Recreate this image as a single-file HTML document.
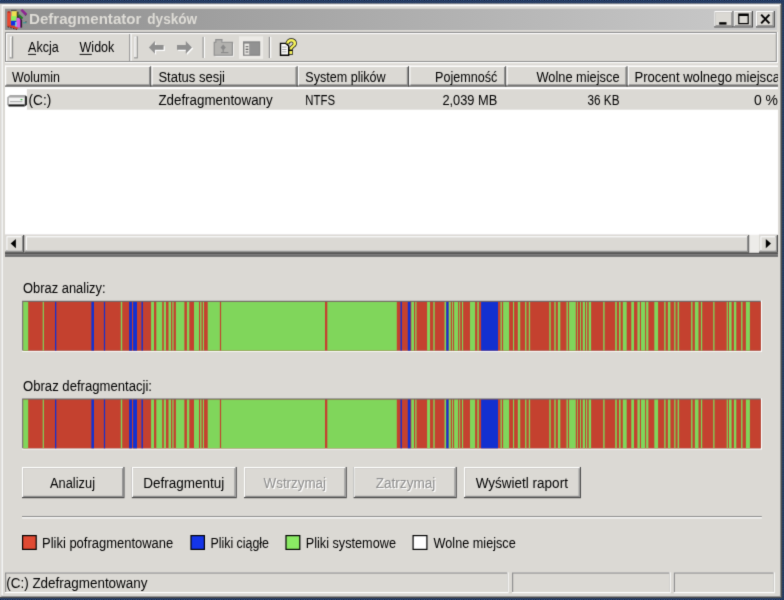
<!DOCTYPE html>
<html><head><meta charset="utf-8"><title>Defragmentator dysków</title>
<style>html,body{margin:0;padding:0;background:#263a5e;overflow:hidden}svg{display:block}text{font-family:"Liberation Sans",sans-serif}</style>
</head><body>
<svg width="784" height="600" viewBox="0 0 784 600">
<defs><filter id="bl" x="0" y="0" width="784" height="600" filterUnits="userSpaceOnUse" color-interpolation-filters="sRGB"><feConvolveMatrix order="3" kernelMatrix="0.0144 0.0912 0.0144 0.0912 0.5776 0.0912 0.0144 0.0912 0.0144" divisor="1" edgeMode="duplicate" preserveAlpha="true"/></filter></defs>
<g filter="url(#bl)">
<defs><pattern id="dp" width="2.4" height="2.4" patternUnits="userSpaceOnUse"><rect width="2.4" height="2.4" fill="#15203a"/><rect width="1.2" height="1.2" fill="#36588c"/><rect x="1.2" y="1.2" width="1.2" height="1.2" fill="#36588c"/></pattern></defs>
<rect x="0.00" y="0.00" width="784.00" height="600.00" fill="url(#dp)" />
<rect x="0.00" y="3.60" width="782.20" height="594.50" fill="#4c4c4c" />
<rect x="0.00" y="3.60" width="781.00" height="593.30" fill="#dbd9d4" />
<rect x="1.30" y="4.90" width="779.70" height="592.00" fill="#909090" />
<rect x="1.30" y="4.60" width="778.50" height="591.10" fill="#ffffff" />
<rect x="2.70" y="6.20" width="777.10" height="589.50" fill="#dbd9d4" />
<defs><linearGradient id="tg" x1="0" x2="1" y1="0" y2="0"><stop offset="0" stop-color="#8f8f8f"/><stop offset="1" stop-color="#cbcbcb"/></linearGradient></defs>
<rect x="5.00" y="8.75" width="772.00" height="21.25" fill="url(#tg)" />
<text y="24.2" font-size="14.5" font-weight="bold" fill="#dedcd6"><tspan x="29" textLength="112.4" lengthAdjust="spacingAndGlyphs">Defragmentator</tspan> <tspan x="147.3" textLength="49.9" lengthAdjust="spacingAndGlyphs">dysków</tspan></text>
<g>
<path d="M7.4 25.4 L10.6 24.4 L18.6 27.6 L17 29.3 L7.4 26.6z" fill="#d63e28"/>
<path d="M7.6 26.8 L16.8 29.6" stroke="#3a1a14" stroke-width="0.9" stroke-dasharray="1.6 1.2"/>
<path d="M7.2 12 L8.8 11.2 L10.8 12 L10.8 25 L7.2 26z" fill="#e8482f"/>
<path d="M7.2 12 L8.8 11.2 L10.8 12 L9 12.8z" fill="#a02a1c"/>
<rect x="11.6" y="11.2" width="5.4" height="5.8" fill="#eedf52"/>
<rect x="16.4" y="11.4" width="1.2" height="6" fill="#a89a30"/>
<rect x="17.4" y="11.8" width="1" height="7" fill="#151515"/>
<path d="M11 10.4 h5.6" stroke="#333" stroke-width="0.8"/>
<rect x="11" y="16.2" width="5.2" height="5" fill="#8af05e"/>
<rect x="11" y="20.8" width="5.2" height="4.6" fill="#1030e2"/>
<rect x="15.2" y="22" width="3" height="4.6" fill="#72e2e2"/>
<rect x="16.6" y="18" width="3.6" height="9.4" fill="#d45fe4"/>
<rect x="20" y="18.6" width="1.3" height="9" fill="#7a1f86"/>
<rect x="21.2" y="20" width="0.9" height="7.6" fill="#151515"/>
<path d="M18 15.4 L19.4 14.2 L23.2 17.8 L21.8 19.4z" fill="#1f7d22"/>
<path d="M17.8 16.2 L21.4 19.8" stroke="#111" stroke-width="0.9"/>
<path d="M20.4 10.6 L22.4 9 L27.2 13.8 L25.3 15.8z" fill="#8c2491"/>
<path d="M25.4 15.6 L26.6 14.6" stroke="#444" stroke-width="1"/>
<rect x="23" y="22.2" width="3.4" height="1.1" fill="#2f9c9c"/>
<rect x="25.5" y="21.3" width="1" height="1" fill="#333"/>
</g>
<rect x="714.20" y="11.00" width="19.40" height="16.50" fill="#4c4c4c" />
<rect x="714.20" y="11.00" width="18.20" height="15.30" fill="#ffffff" />
<rect x="715.40" y="12.20" width="17.00" height="14.10" fill="#909090" />
<rect x="715.40" y="12.20" width="15.80" height="12.90" fill="#dbd9d4" />
<rect x="733.60" y="11.00" width="19.40" height="16.50" fill="#4c4c4c" />
<rect x="733.60" y="11.00" width="18.20" height="15.30" fill="#ffffff" />
<rect x="734.80" y="12.20" width="17.00" height="14.10" fill="#909090" />
<rect x="734.80" y="12.20" width="15.80" height="12.90" fill="#dbd9d4" />
<rect x="756.00" y="11.00" width="18.90" height="16.50" fill="#4c4c4c" />
<rect x="756.00" y="11.00" width="17.70" height="15.30" fill="#ffffff" />
<rect x="757.20" y="12.20" width="16.50" height="14.10" fill="#909090" />
<rect x="757.20" y="12.20" width="15.30" height="12.90" fill="#dbd9d4" />
<rect x="719.20" y="22.20" width="7.30" height="2.40" fill="#000" />
<path d="M738.2 13.6h10.6v10.6h-10.6z M739.4 16h8.2v7h-8.2z" fill="#000" fill-rule="evenodd"/>
<path d="M761.2 14.6 L769.4 23.4 M769.4 14.6 L761.2 23.4" stroke="#000" stroke-width="2" fill="none"/>
<rect x="5.00" y="31.90" width="772.00" height="1.10" fill="#909090" />
<rect x="5.00" y="33.00" width="772.00" height="1.10" fill="#ffffff" />
<rect x="5.00" y="61.00" width="772.00" height="1.00" fill="#909090" />
<rect x="5.00" y="62.00" width="772.00" height="1.20" fill="#ffffff" />
<rect x="5.00" y="33.00" width="1.00" height="29.00" fill="#909090" />
<rect x="6.00" y="34.00" width="1.10" height="27.00" fill="#ffffff" />
<rect x="775.80" y="33.00" width="1.10" height="29.00" fill="#909090" />
<rect x="776.90" y="32.00" width="1.10" height="31.00" fill="#ffffff" />
<rect x="9.60" y="36.30" width="3.60" height="22.10" fill="#909090" />
<rect x="9.60" y="36.30" width="2.40" height="20.90" fill="#ffffff" />
<rect x="10.80" y="37.50" width="1.20" height="19.70" fill="#dbd9d4" />
<rect x="129.20" y="34.00" width="1.20" height="27.00" fill="#909090" />
<rect x="130.40" y="34.00" width="1.20" height="27.00" fill="#ffffff" />
<rect x="134.20" y="36.30" width="3.60" height="22.10" fill="#909090" />
<rect x="134.20" y="36.30" width="2.40" height="20.90" fill="#ffffff" />
<rect x="135.40" y="37.50" width="1.20" height="19.70" fill="#dbd9d4" />
<text x="28.10" y="51.90" font-size="14" font-weight="normal" fill="#000" textLength="30.65" lengthAdjust="spacingAndGlyphs" >Akcja</text>
<rect x="28.10" y="53.90" width="7.90" height="1.10" fill="#222" />
<text x="79.60" y="51.90" font-size="14" font-weight="normal" fill="#000" textLength="34.65" lengthAdjust="spacingAndGlyphs" >Widok</text>
<rect x="79.60" y="53.90" width="12.20" height="1.10" fill="#222" />
<path d="M150.1 48.6 l6 -6.3 v4 h8.7 v4.6 h-8.7 v4 z" fill="#ffffff"/>
<path d="M148.9 47.4 l6 -6.3 v4 h8.7 v4.6 h-8.7 v4 z" fill="#8f8f8f"/>
<path d="M193.2 48.6 l-6.2 -6.3 v4 h-8.8 v4.6 h8.8 v4 z" fill="#ffffff"/>
<path d="M192 47.4 l-6.2 -6.3 v4 h-8.8 v4.6 h8.8 v4 z" fill="#8f8f8f"/>
<rect x="202.60" y="36.90" width="1.20" height="21.10" fill="#909090" />
<rect x="203.80" y="36.90" width="1.20" height="21.10" fill="#ffffff" />
<rect x="268.80" y="36.90" width="1.20" height="21.10" fill="#909090" />
<rect x="270.00" y="36.90" width="1.20" height="21.10" fill="#ffffff" />
<path d="M215.4 43.4 h1.6 v-2.6 h6.2 v2.6 h10.4 v13 h-18.2 z" fill="#fff"/>
<path d="M214.2 42.2 h1.6 v-2.6 h6.2 v2.6 h10.4 v13 h-18.2 z" fill="#b3b2af" stroke="#8c8c8c" stroke-width="1.1"/>
<path d="M223.2 44.6 l2.6 3 l-2.6 3 l-2.6 -3 z" fill="#8a8a8a"/><rect x="222.6" y="50" width="1.2" height="3" fill="#8a8a8a"/><rect x="221" y="52" width="7.4" height="1.2" fill="#8a8a8a"/>
<rect x="239.00" y="36.30" width="24.10" height="22.60" fill="#eceae6" />
<rect x="243.00" y="41.30" width="17.20" height="14.50" fill="#858585" />
<rect x="244.40" y="43.60" width="5.10" height="11.00" fill="#e8e6e2" />
<rect x="249.50" y="42.60" width="9.70" height="12.00" fill="#929292" />
<rect x="245.60" y="46.00" width="2.80" height="1.20" fill="#777" />
<rect x="245.60" y="48.70" width="2.80" height="1.20" fill="#555" />
<rect x="245.60" y="51.40" width="2.80" height="1.20" fill="#777" />
<path d="M280.5 43.4 h5.6 l2.6 2.6 v9.2 h-8.2 z" fill="#fff" stroke="#000" stroke-width="1.4"/>
<rect x="282.20" y="46.60" width="4.40" height="0.90" fill="#9a9a9a" />
<rect x="282.20" y="49.00" width="4.40" height="0.90" fill="#9a9a9a" />
<rect x="282.20" y="51.40" width="4.40" height="0.90" fill="#9a9a9a" />
<text x="285.2" y="54.2" font-size="21.5" font-weight="bold" fill="#f6f25c" stroke="#000" stroke-width="1.5" paint-order="stroke" textLength="12" lengthAdjust="spacingAndGlyphs">?</text>
<rect x="5.00" y="65.60" width="773.00" height="187.40" fill="#ffffff" />
<rect x="5.00" y="65.60" width="773.00" height="21.00" fill="#dbd9d4" />
<rect x="5.00" y="65.60" width="773.00" height="1.30" fill="#ffffff" />
<rect x="5.00" y="84.30" width="773.00" height="1.20" fill="#909090" />
<rect x="5.00" y="85.40" width="773.00" height="1.20" fill="#4c4c4c" />
<rect x="149.00" y="67.00" width="1.20" height="18.40" fill="#909090" />
<rect x="150.20" y="66.20" width="1.20" height="20.40" fill="#4c4c4c" />
<rect x="151.40" y="65.60" width="1.20" height="19.80" fill="#ffffff" />
<rect x="295.40" y="67.00" width="1.20" height="18.40" fill="#909090" />
<rect x="296.60" y="66.20" width="1.20" height="20.40" fill="#4c4c4c" />
<rect x="297.80" y="65.60" width="1.20" height="19.80" fill="#ffffff" />
<rect x="406.80" y="67.00" width="1.20" height="18.40" fill="#909090" />
<rect x="408.00" y="66.20" width="1.20" height="20.40" fill="#4c4c4c" />
<rect x="409.20" y="65.60" width="1.20" height="19.80" fill="#ffffff" />
<rect x="504.00" y="67.00" width="1.20" height="18.40" fill="#909090" />
<rect x="505.20" y="66.20" width="1.20" height="20.40" fill="#4c4c4c" />
<rect x="506.40" y="65.60" width="1.20" height="19.80" fill="#ffffff" />
<rect x="625.30" y="67.00" width="1.20" height="18.40" fill="#909090" />
<rect x="626.50" y="66.20" width="1.20" height="20.40" fill="#4c4c4c" />
<rect x="627.70" y="65.60" width="1.20" height="19.80" fill="#ffffff" />
<rect x="5.00" y="65.60" width="1.20" height="19.80" fill="#ffffff" />
<text x="11.90" y="81.50" font-size="14" font-weight="normal" fill="#000" textLength="48.10" lengthAdjust="spacingAndGlyphs" >Wolumin</text>
<text x="158.40" y="81.50" font-size="14" font-weight="normal" fill="#000" textLength="66.60" lengthAdjust="spacingAndGlyphs" >Status sesji</text>
<text x="305.30" y="81.50" font-size="14" font-weight="normal" fill="#000" textLength="80.40" lengthAdjust="spacingAndGlyphs" >System plików</text>
<text x="435.00" y="81.50" font-size="14" font-weight="normal" fill="#000" textLength="62.30" lengthAdjust="spacingAndGlyphs" >Pojemność</text>
<text x="536.50" y="81.50" font-size="14" font-weight="normal" fill="#000" textLength="83.00" lengthAdjust="spacingAndGlyphs" >Wolne miejsce</text>
<clipPath id="lc"><rect x="5" y="60" width="773" height="200"/></clipPath>
<text x="634.40" y="81.50" font-size="14" font-weight="normal" fill="#000" textLength="145.60" lengthAdjust="spacingAndGlyphs" clip-path="url(#lc)">Procent wolnego miejsca</text>
<rect x="26.90" y="89.20" width="751.10" height="20.50" fill="#dbd9d4" />
<text x="28.60" y="105.00" font-size="14" font-weight="normal" fill="#000" textLength="22.65" lengthAdjust="spacingAndGlyphs" >(C:)</text>
<text x="158.40" y="105.00" font-size="14" font-weight="normal" fill="#000" textLength="114.30" lengthAdjust="spacingAndGlyphs" >Zdefragmentowany</text>
<text x="305.30" y="105.00" font-size="14" font-weight="normal" fill="#000" textLength="29.70" lengthAdjust="spacingAndGlyphs" >NTFS</text>
<text x="442.40" y="105.00" font-size="14" font-weight="normal" fill="#000" textLength="54.90" lengthAdjust="spacingAndGlyphs" >2,039 MB</text>
<text x="587.60" y="105.00" font-size="14" font-weight="normal" fill="#000" textLength="31.90" lengthAdjust="spacingAndGlyphs" >36 KB</text>
<text x="754.00" y="105.00" font-size="14" font-weight="normal" fill="#000" textLength="24.00" lengthAdjust="spacingAndGlyphs" >0 %</text>
<path d="M10 95 h15 l2 1.6 v8 l-2.6 1.8 h-15.6 l-1.6 -1.6 v-7.6 z" fill="#a8a8a8"/>
<path d="M25 95.4 l2 1.4 v8 l-2.4 1.6 z" fill="#2c2c2c"/>
<rect x="8.60" y="104.40" width="15.80" height="2.00" fill="#1c1c1c" />
<rect x="8.80" y="97.60" width="15.80" height="6.60" fill="#f2f2f2" />
<rect x="10.00" y="101.00" width="12.40" height="1.20" fill="#b4b4b4" />
<rect x="20.60" y="99.00" width="1.80" height="1.20" fill="#3fae3f" />
<rect x="5.00" y="234.90" width="773.00" height="17.90" fill="#dbd9d4" />
<rect x="5.00" y="234.90" width="19.20" height="17.90" fill="#4c4c4c" />
<rect x="5.00" y="234.90" width="18.00" height="16.70" fill="#dbd9d4" />
<rect x="6.20" y="236.10" width="16.80" height="15.50" fill="#909090" />
<rect x="6.20" y="236.10" width="15.60" height="14.30" fill="#ffffff" />
<rect x="7.40" y="237.30" width="14.40" height="13.10" fill="#dbd9d4" />
<rect x="24.40" y="234.90" width="725.00" height="17.90" fill="#4c4c4c" />
<rect x="24.40" y="234.90" width="723.80" height="16.70" fill="#dbd9d4" />
<rect x="25.60" y="236.10" width="722.60" height="15.50" fill="#909090" />
<rect x="25.60" y="236.10" width="721.40" height="14.30" fill="#ffffff" />
<rect x="26.80" y="237.30" width="720.20" height="13.10" fill="#dbd9d4" />
<rect x="749.40" y="234.90" width="9.60" height="17.90" fill="#edece9" />
<rect x="759.00" y="234.90" width="19.00" height="17.90" fill="#4c4c4c" />
<rect x="759.00" y="234.90" width="17.80" height="16.70" fill="#dbd9d4" />
<rect x="760.20" y="236.10" width="16.60" height="15.50" fill="#909090" />
<rect x="760.20" y="236.10" width="15.40" height="14.30" fill="#ffffff" />
<rect x="761.40" y="237.30" width="14.20" height="13.10" fill="#dbd9d4" />
<path d="M10.7 243.6 l5.2 -4.6 v9.2 z" fill="#000"/>
<path d="M771 243.6 l-5.2 -4.6 v9.2 z" fill="#000"/>
<rect x="5.00" y="252.80" width="773.00" height="1.40" fill="#555" />
<rect x="5.00" y="254.20" width="773.00" height="2.70" fill="#6e6e6e" />
<text x="23.00" y="293.00" font-size="14" font-weight="normal" fill="#000" textLength="82.50" lengthAdjust="spacingAndGlyphs" >Obraz analizy:</text>
<text x="23.00" y="390.50" font-size="14" font-weight="normal" fill="#000" textLength="129.00" lengthAdjust="spacingAndGlyphs" >Obraz defragmentacji:</text>
<g transform="translate(0 300.7)">
<rect x="22.10" y="0.00" width="739.90" height="51.10" fill="#ffffff" />
<rect x="22.10" y="0.00" width="738.70" height="49.90" fill="#6a6a6a" />
<rect x="23.20" y="1.20" width="737.60" height="48.70" fill="#c4412f" />
<rect x="23.20" y="1.20" width="5.00" height="48.70" fill="#80d65b" />
<rect x="42.70" y="1.20" width="1.20" height="48.70" fill="#80d65b" />
<rect x="55.00" y="1.20" width="1.30" height="48.70" fill="#1330d0" />
<rect x="91.40" y="1.20" width="2.60" height="48.70" fill="#1330d0" />
<rect x="103.90" y="1.20" width="1.20" height="48.70" fill="#1330d0" />
<rect x="120.80" y="1.20" width="1.40" height="48.70" fill="#80d65b" />
<rect x="129.10" y="1.20" width="2.90" height="48.70" fill="#1330d0" />
<rect x="133.10" y="1.20" width="3.90" height="48.70" fill="#1330d0" />
<rect x="141.50" y="1.20" width="1.40" height="48.70" fill="#1330d0" />
<rect x="151.10" y="1.20" width="2.90" height="48.70" fill="#80d65b" />
<rect x="156.30" y="1.20" width="5.90" height="48.70" fill="#80d65b" />
<rect x="163.80" y="1.20" width="2.20" height="48.70" fill="#80d65b" />
<rect x="168.50" y="1.20" width="2.50" height="48.70" fill="#80d65b" />
<rect x="172.30" y="1.20" width="1.30" height="48.70" fill="#80d65b" />
<rect x="175.90" y="1.20" width="8.50" height="48.70" fill="#80d65b" />
<rect x="186.90" y="1.20" width="2.40" height="48.70" fill="#80d65b" />
<rect x="194.00" y="1.20" width="5.00" height="48.70" fill="#80d65b" />
<rect x="200.10" y="1.20" width="1.40" height="48.70" fill="#80d65b" />
<rect x="202.90" y="1.20" width="1.10" height="48.70" fill="#80d65b" />
<rect x="207.70" y="1.20" width="12.20" height="48.70" fill="#80d65b" />
<rect x="221.10" y="1.20" width="103.90" height="48.70" fill="#80d65b" />
<rect x="327.30" y="1.20" width="69.50" height="48.70" fill="#80d65b" />
<rect x="400.50" y="1.20" width="1.40" height="48.70" fill="#1330d0" />
<rect x="407.80" y="1.20" width="2.70" height="48.70" fill="#1330d0" />
<rect x="411.30" y="1.20" width="2.70" height="48.70" fill="#80d65b" />
<rect x="415.20" y="1.20" width="1.30" height="48.70" fill="#80d65b" />
<rect x="427.10" y="1.20" width="2.90" height="48.70" fill="#80d65b" />
<rect x="433.30" y="1.20" width="1.40" height="48.70" fill="#80d65b" />
<rect x="444.50" y="1.20" width="1.80" height="48.70" fill="#80d65b" />
<rect x="446.30" y="1.20" width="2.45" height="48.70" fill="#1330d0" />
<rect x="448.75" y="1.20" width="2.05" height="48.70" fill="#80d65b" />
<rect x="452.00" y="1.20" width="1.00" height="48.70" fill="#80d65b" />
<rect x="454.10" y="1.20" width="4.00" height="48.70" fill="#80d65b" />
<rect x="459.20" y="1.20" width="1.00" height="48.70" fill="#80d65b" />
<rect x="462.00" y="1.20" width="1.10" height="48.70" fill="#80d65b" />
<rect x="470.00" y="1.20" width="5.10" height="48.70" fill="#80d65b" />
<rect x="477.30" y="1.20" width="1.50" height="48.70" fill="#80d65b" />
<rect x="481.10" y="1.20" width="16.90" height="48.70" fill="#1330d0" />
<rect x="500.50" y="1.20" width="1.40" height="48.70" fill="#80d65b" />
<rect x="503.10" y="1.20" width="6.00" height="48.70" fill="#80d65b" />
<rect x="513.00" y="1.20" width="1.10" height="48.70" fill="#80d65b" />
<rect x="517.80" y="1.20" width="2.40" height="48.70" fill="#80d65b" />
<rect x="525.10" y="1.20" width="1.30" height="48.70" fill="#80d65b" />
<rect x="528.80" y="1.20" width="1.30" height="48.70" fill="#80d65b" />
<rect x="549.30" y="1.20" width="1.40" height="48.70" fill="#80d65b" />
<rect x="554.30" y="1.20" width="1.40" height="48.70" fill="#80d65b" />
<rect x="557.90" y="1.20" width="2.40" height="48.70" fill="#80d65b" />
<rect x="566.50" y="1.20" width="1.40" height="48.70" fill="#80d65b" />
<rect x="569.10" y="1.20" width="6.70" height="48.70" fill="#80d65b" />
<rect x="577.00" y="1.20" width="0.80" height="48.70" fill="#80d65b" />
<rect x="580.00" y="1.20" width="1.00" height="48.70" fill="#80d65b" />
<rect x="582.70" y="1.20" width="2.30" height="48.70" fill="#80d65b" />
<rect x="586.00" y="1.20" width="1.20" height="48.70" fill="#80d65b" />
<rect x="588.70" y="1.20" width="2.40" height="48.70" fill="#80d65b" />
<rect x="603.20" y="1.20" width="1.40" height="48.70" fill="#80d65b" />
<rect x="615.20" y="1.20" width="1.60" height="48.70" fill="#80d65b" />
<rect x="619.00" y="1.20" width="1.60" height="48.70" fill="#80d65b" />
<rect x="622.80" y="1.20" width="3.90" height="48.70" fill="#80d65b" />
<rect x="631.25" y="1.20" width="2.75" height="48.70" fill="#80d65b" />
<rect x="637.40" y="1.20" width="2.50" height="48.70" fill="#80d65b" />
<rect x="641.00" y="1.20" width="4.10" height="48.70" fill="#80d65b" />
<rect x="646.10" y="1.20" width="2.30" height="48.70" fill="#80d65b" />
<rect x="654.30" y="1.20" width="3.80" height="48.70" fill="#80d65b" />
<rect x="664.20" y="1.20" width="1.40" height="48.70" fill="#80d65b" />
<rect x="667.90" y="1.20" width="2.50" height="48.70" fill="#80d65b" />
<rect x="674.20" y="1.20" width="1.30" height="48.70" fill="#80d65b" />
<rect x="677.60" y="1.20" width="1.50" height="48.70" fill="#80d65b" />
<rect x="691.10" y="1.20" width="1.40" height="48.70" fill="#80d65b" />
<rect x="694.85" y="1.20" width="3.65" height="48.70" fill="#80d65b" />
<rect x="700.90" y="1.20" width="1.30" height="48.70" fill="#80d65b" />
<rect x="713.20" y="1.20" width="1.30" height="48.70" fill="#80d65b" />
<rect x="726.70" y="1.20" width="1.20" height="48.70" fill="#80d65b" />
<rect x="729.00" y="1.20" width="2.60" height="48.70" fill="#80d65b" />
<rect x="733.90" y="1.20" width="2.40" height="48.70" fill="#80d65b" />
<rect x="741.10" y="1.20" width="1.40" height="48.70" fill="#80d65b" />
<rect x="745.90" y="1.20" width="4.00" height="48.70" fill="#80d65b" />
</g>
<g transform="translate(0 398.4)">
<rect x="22.10" y="0.00" width="739.90" height="51.10" fill="#ffffff" />
<rect x="22.10" y="0.00" width="738.70" height="49.90" fill="#6a6a6a" />
<rect x="23.20" y="1.20" width="737.60" height="48.70" fill="#c4412f" />
<rect x="23.20" y="1.20" width="5.00" height="48.70" fill="#80d65b" />
<rect x="42.70" y="1.20" width="1.20" height="48.70" fill="#80d65b" />
<rect x="55.00" y="1.20" width="1.30" height="48.70" fill="#1330d0" />
<rect x="91.40" y="1.20" width="2.60" height="48.70" fill="#1330d0" />
<rect x="103.90" y="1.20" width="1.20" height="48.70" fill="#1330d0" />
<rect x="120.80" y="1.20" width="1.40" height="48.70" fill="#80d65b" />
<rect x="129.10" y="1.20" width="2.90" height="48.70" fill="#1330d0" />
<rect x="133.10" y="1.20" width="3.90" height="48.70" fill="#1330d0" />
<rect x="141.50" y="1.20" width="1.40" height="48.70" fill="#1330d0" />
<rect x="151.10" y="1.20" width="2.90" height="48.70" fill="#80d65b" />
<rect x="156.30" y="1.20" width="5.90" height="48.70" fill="#80d65b" />
<rect x="163.80" y="1.20" width="2.20" height="48.70" fill="#80d65b" />
<rect x="168.50" y="1.20" width="2.50" height="48.70" fill="#80d65b" />
<rect x="172.30" y="1.20" width="1.30" height="48.70" fill="#80d65b" />
<rect x="175.90" y="1.20" width="8.50" height="48.70" fill="#80d65b" />
<rect x="186.90" y="1.20" width="2.40" height="48.70" fill="#80d65b" />
<rect x="194.00" y="1.20" width="5.00" height="48.70" fill="#80d65b" />
<rect x="200.10" y="1.20" width="1.40" height="48.70" fill="#80d65b" />
<rect x="202.90" y="1.20" width="1.10" height="48.70" fill="#80d65b" />
<rect x="207.70" y="1.20" width="12.20" height="48.70" fill="#80d65b" />
<rect x="221.10" y="1.20" width="103.90" height="48.70" fill="#80d65b" />
<rect x="327.30" y="1.20" width="69.50" height="48.70" fill="#80d65b" />
<rect x="400.50" y="1.20" width="1.40" height="48.70" fill="#1330d0" />
<rect x="407.80" y="1.20" width="2.70" height="48.70" fill="#1330d0" />
<rect x="411.30" y="1.20" width="2.70" height="48.70" fill="#80d65b" />
<rect x="415.20" y="1.20" width="1.30" height="48.70" fill="#80d65b" />
<rect x="427.10" y="1.20" width="2.90" height="48.70" fill="#80d65b" />
<rect x="433.30" y="1.20" width="1.40" height="48.70" fill="#80d65b" />
<rect x="444.50" y="1.20" width="1.80" height="48.70" fill="#80d65b" />
<rect x="446.30" y="1.20" width="2.45" height="48.70" fill="#1330d0" />
<rect x="448.75" y="1.20" width="2.05" height="48.70" fill="#80d65b" />
<rect x="452.00" y="1.20" width="1.00" height="48.70" fill="#80d65b" />
<rect x="454.10" y="1.20" width="4.00" height="48.70" fill="#80d65b" />
<rect x="459.20" y="1.20" width="1.00" height="48.70" fill="#80d65b" />
<rect x="462.00" y="1.20" width="1.10" height="48.70" fill="#80d65b" />
<rect x="470.00" y="1.20" width="5.10" height="48.70" fill="#80d65b" />
<rect x="477.30" y="1.20" width="1.50" height="48.70" fill="#80d65b" />
<rect x="481.10" y="1.20" width="16.90" height="48.70" fill="#1330d0" />
<rect x="500.50" y="1.20" width="1.40" height="48.70" fill="#80d65b" />
<rect x="503.10" y="1.20" width="6.00" height="48.70" fill="#80d65b" />
<rect x="513.00" y="1.20" width="1.10" height="48.70" fill="#80d65b" />
<rect x="517.80" y="1.20" width="2.40" height="48.70" fill="#80d65b" />
<rect x="525.10" y="1.20" width="1.30" height="48.70" fill="#80d65b" />
<rect x="528.80" y="1.20" width="1.30" height="48.70" fill="#80d65b" />
<rect x="549.30" y="1.20" width="1.40" height="48.70" fill="#80d65b" />
<rect x="554.30" y="1.20" width="1.40" height="48.70" fill="#80d65b" />
<rect x="557.90" y="1.20" width="2.40" height="48.70" fill="#80d65b" />
<rect x="566.50" y="1.20" width="1.40" height="48.70" fill="#80d65b" />
<rect x="569.10" y="1.20" width="6.70" height="48.70" fill="#80d65b" />
<rect x="577.00" y="1.20" width="0.80" height="48.70" fill="#80d65b" />
<rect x="580.00" y="1.20" width="1.00" height="48.70" fill="#80d65b" />
<rect x="582.70" y="1.20" width="2.30" height="48.70" fill="#80d65b" />
<rect x="586.00" y="1.20" width="1.20" height="48.70" fill="#80d65b" />
<rect x="588.70" y="1.20" width="2.40" height="48.70" fill="#80d65b" />
<rect x="603.20" y="1.20" width="1.40" height="48.70" fill="#80d65b" />
<rect x="615.20" y="1.20" width="1.60" height="48.70" fill="#80d65b" />
<rect x="619.00" y="1.20" width="1.60" height="48.70" fill="#80d65b" />
<rect x="622.80" y="1.20" width="3.90" height="48.70" fill="#80d65b" />
<rect x="631.25" y="1.20" width="2.75" height="48.70" fill="#80d65b" />
<rect x="637.40" y="1.20" width="2.50" height="48.70" fill="#80d65b" />
<rect x="641.00" y="1.20" width="4.10" height="48.70" fill="#80d65b" />
<rect x="646.10" y="1.20" width="2.30" height="48.70" fill="#80d65b" />
<rect x="654.30" y="1.20" width="3.80" height="48.70" fill="#80d65b" />
<rect x="664.20" y="1.20" width="1.40" height="48.70" fill="#80d65b" />
<rect x="667.90" y="1.20" width="2.50" height="48.70" fill="#80d65b" />
<rect x="674.20" y="1.20" width="1.30" height="48.70" fill="#80d65b" />
<rect x="677.60" y="1.20" width="1.50" height="48.70" fill="#80d65b" />
<rect x="691.10" y="1.20" width="1.40" height="48.70" fill="#80d65b" />
<rect x="694.85" y="1.20" width="3.65" height="48.70" fill="#80d65b" />
<rect x="700.90" y="1.20" width="1.30" height="48.70" fill="#80d65b" />
<rect x="713.20" y="1.20" width="1.30" height="48.70" fill="#80d65b" />
<rect x="726.70" y="1.20" width="1.20" height="48.70" fill="#80d65b" />
<rect x="729.00" y="1.20" width="2.60" height="48.70" fill="#80d65b" />
<rect x="733.90" y="1.20" width="2.40" height="48.70" fill="#80d65b" />
<rect x="741.10" y="1.20" width="1.40" height="48.70" fill="#80d65b" />
<rect x="745.90" y="1.20" width="4.00" height="48.70" fill="#80d65b" />
</g>
<rect x="22.00" y="467.00" width="102.50" height="31.20" fill="#4c4c4c" />
<rect x="22.00" y="467.00" width="101.30" height="30.00" fill="#ffffff" />
<rect x="23.20" y="468.20" width="100.10" height="28.80" fill="#909090" />
<rect x="23.20" y="468.20" width="98.90" height="27.60" fill="#dbd9d4" />
<text x="50.00" y="487.50" font-size="14" font-weight="normal" fill="#000" textLength="45.00" lengthAdjust="spacingAndGlyphs" >Analizuj</text>
<rect x="131.80" y="467.00" width="105.00" height="31.20" fill="#4c4c4c" />
<rect x="131.80" y="467.00" width="103.80" height="30.00" fill="#ffffff" />
<rect x="133.00" y="468.20" width="102.60" height="28.80" fill="#909090" />
<rect x="133.00" y="468.20" width="101.40" height="27.60" fill="#dbd9d4" />
<text x="143.20" y="487.50" font-size="14" font-weight="normal" fill="#000" textLength="81.10" lengthAdjust="spacingAndGlyphs" >Defragmentuj</text>
<rect x="244.00" y="467.00" width="102.80" height="31.20" fill="#4c4c4c" />
<rect x="244.00" y="467.00" width="101.60" height="30.00" fill="#ffffff" />
<rect x="245.20" y="468.20" width="100.40" height="28.80" fill="#909090" />
<rect x="245.20" y="468.20" width="99.20" height="27.60" fill="#dbd9d4" />
<text x="264.80" y="488.70" font-size="14" font-weight="normal" fill="#ffffff" textLength="62.40" lengthAdjust="spacingAndGlyphs" >Wstrzymaj</text>
<text x="263.60" y="487.50" font-size="14" font-weight="normal" fill="#8f8f8f" textLength="62.40" lengthAdjust="spacingAndGlyphs" >Wstrzymaj</text>
<rect x="353.60" y="467.00" width="103.20" height="31.20" fill="#4c4c4c" />
<rect x="353.60" y="467.00" width="102.00" height="30.00" fill="#ffffff" />
<rect x="354.80" y="468.20" width="100.80" height="28.80" fill="#909090" />
<rect x="354.80" y="468.20" width="99.60" height="27.60" fill="#dbd9d4" />
<text x="376.90" y="488.70" font-size="14" font-weight="normal" fill="#ffffff" textLength="59.70" lengthAdjust="spacingAndGlyphs" >Zatrzymaj</text>
<text x="375.70" y="487.50" font-size="14" font-weight="normal" fill="#8f8f8f" textLength="59.70" lengthAdjust="spacingAndGlyphs" >Zatrzymaj</text>
<rect x="464.00" y="467.00" width="117.00" height="31.20" fill="#4c4c4c" />
<rect x="464.00" y="467.00" width="115.80" height="30.00" fill="#ffffff" />
<rect x="465.20" y="468.20" width="114.60" height="28.80" fill="#909090" />
<rect x="465.20" y="468.20" width="113.40" height="27.60" fill="#dbd9d4" />
<text x="475.70" y="487.50" font-size="14" font-weight="normal" fill="#000" textLength="92.20" lengthAdjust="spacingAndGlyphs" >Wyświetl raport</text>
<rect x="22.00" y="516.00" width="739.80" height="1.20" fill="#909090" />
<rect x="22.00" y="517.20" width="739.80" height="1.20" fill="#ffffff" />
<rect x="22.00" y="535.00" width="14.80" height="15.00" fill="#000" />
<rect x="23.20" y="536.20" width="12.40" height="12.60" fill="#e04a33" />
<text x="42.00" y="548.00" font-size="14" font-weight="normal" fill="#000" textLength="131.25" lengthAdjust="spacingAndGlyphs" >Pliki pofragmentowane</text>
<rect x="190.40" y="535.00" width="14.60" height="15.00" fill="#000" />
<rect x="191.60" y="536.20" width="12.20" height="12.60" fill="#1435e8" />
<text x="210.40" y="548.00" font-size="14" font-weight="normal" fill="#000" textLength="58.60" lengthAdjust="spacingAndGlyphs" >Pliki ciągłe</text>
<rect x="285.40" y="535.00" width="15.00" height="15.00" fill="#000" />
<rect x="286.60" y="536.20" width="12.60" height="12.60" fill="#8aea64" />
<text x="305.70" y="548.00" font-size="14" font-weight="normal" fill="#000" textLength="90.30" lengthAdjust="spacingAndGlyphs" >Pliki systemowe</text>
<rect x="412.50" y="535.00" width="15.00" height="15.00" fill="#000" />
<rect x="413.70" y="536.20" width="12.60" height="12.60" fill="#ffffff" />
<text x="433.60" y="548.00" font-size="14" font-weight="normal" fill="#000" textLength="82.10" lengthAdjust="spacingAndGlyphs" >Wolne miejsce</text>
<rect x="5.00" y="572.40" width="503.60" height="20.80" fill="#ffffff" />
<rect x="5.00" y="572.40" width="502.40" height="19.60" fill="#909090" />
<rect x="6.20" y="573.60" width="501.20" height="18.40" fill="#dbd9d4" />
<rect x="512.00" y="572.40" width="158.70" height="20.80" fill="#ffffff" />
<rect x="512.00" y="572.40" width="157.50" height="19.60" fill="#909090" />
<rect x="513.20" y="573.60" width="156.30" height="18.40" fill="#dbd9d4" />
<rect x="673.80" y="572.40" width="101.00" height="20.80" fill="#ffffff" />
<rect x="673.80" y="572.40" width="99.80" height="19.60" fill="#909090" />
<rect x="675.00" y="573.60" width="98.60" height="18.40" fill="#dbd9d4" />
<text x="6.25" y="587.50" font-size="14" font-weight="normal" fill="#000" textLength="141.25" lengthAdjust="spacingAndGlyphs" >(C:) Zdefragmentowany</text>
</g>
</svg>
</body></html>
